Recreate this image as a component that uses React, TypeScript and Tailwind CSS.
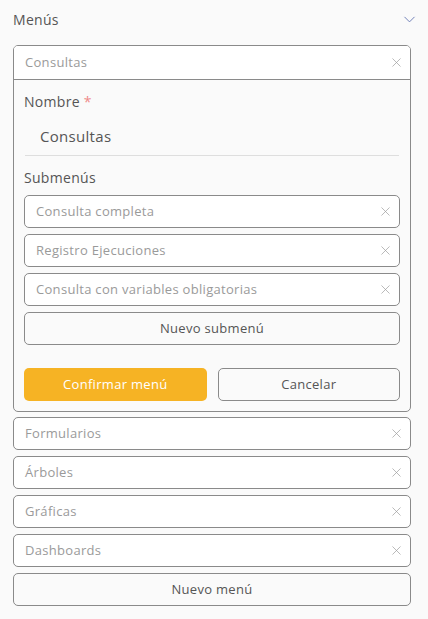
import { ChevronDown, X } from 'lucide-react'

const font = { fontFamily: '"Open Sans", "Liberation Sans", sans-serif' }

function Row({ label }: { label: string }) {
  return (
    <div className="h-[33px] flex items-center justify-between bg-white border border-[#8a8a8a] rounded-[5px] pl-[11px] pr-[6px]">
      <span className="text-[13px] text-[#9a9a9a]">{label}</span>
      <X size={15} strokeWidth={1.1} className="text-[#9a9a9a]" />
    </div>
  )
}

export default function App() {
  const submenus = ['Consulta completa', 'Registro Ejecuciones', 'Consulta con variables obligatorias']
  const menus = ['Formularios', 'Árboles', 'Gráficas', 'Dashboards']

  return (
    <div className="min-h-[619px] bg-[#fafafa] pl-[13px] pr-[13px] pt-[8px] pb-[12px] tracking-[0.3px]" style={font}>
      <div className="flex items-center justify-between h-[22px]">
        <span className="text-[14px] text-[#555]">Menús</span>
        <ChevronDown size={19} strokeWidth={1.2} className="text-[#6b7bb5] -mr-[4px]" />
      </div>

      <div className="mr-[4px]">
        <div className="mt-[15px] border border-[#8a8a8a] rounded-[5px] overflow-hidden">
          <div className="h-[34px] flex items-center justify-between bg-white border-b border-[#8a8a8a] pl-[11px] pr-[6px]">
            <span className="text-[13px] text-[#9a9a9a]">Consultas</span>
            <X size={15} strokeWidth={1.1} className="text-[#9a9a9a]" />
          </div>
          <div className="px-[10px] pt-[12px] pb-[10px]">
            <div className="text-[14px] text-[#555] leading-[20px]">
              Nombre <span className="text-[#ef8a8a]">*</span>
            </div>
            <div className="pl-[16px] pt-[14px] pb-[9px] text-[15px] text-[#555] leading-[20px]">Consultas</div>
            <div className="mx-[1px] border-t border-[#dedede]" />
            <div className="mt-[12px] text-[14px] text-[#555] leading-[20px]">Submenús</div>
            <div className="mt-[7px] flex flex-col gap-[6px]">
              {submenus.map((s) => (
                <Row key={s} label={s} />
              ))}
              <button className="h-[33px] bg-[#fafafa] border border-[#8a8a8a] rounded-[5px] text-[13px] text-[#555]">
                Nuevo submenú
              </button>
            </div>
            <div className="mt-[23px] grid grid-cols-2 gap-[11px]">
              <button className="h-[33px] bg-[#f6b324] rounded-[5px] text-[13px] text-white">Confirmar menú</button>
              <button className="h-[33px] bg-[#fafafa] border border-[#8a8a8a] rounded-[5px] text-[13px] text-[#555]">
                Cancelar
              </button>
            </div>
          </div>
        </div>

        <div className="mt-[5px] flex flex-col gap-[6px]">
          {menus.map((m) => (
            <Row key={m} label={m} />
          ))}
          <button className="h-[33px] bg-[#fafafa] border border-[#8a8a8a] rounded-[5px] text-[13px] text-[#555]">
            Nuevo menú
          </button>
        </div>
      </div>
    </div>
  )
}
